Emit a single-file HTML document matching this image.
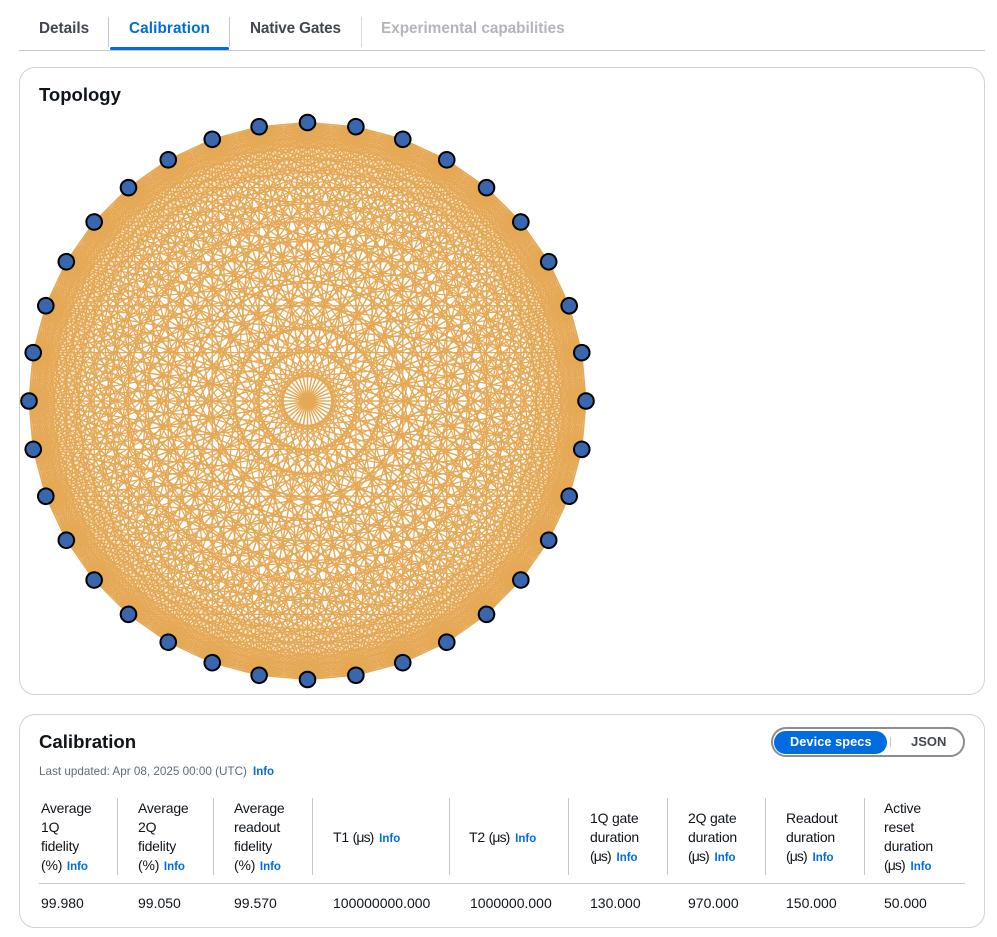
<!DOCTYPE html>
<html>
<head>
<meta charset="utf-8">
<style>
html,body{margin:0;padding:0;background:#fff;}
body{width:997px;height:937px;position:relative;overflow:hidden;font-family:"Liberation Sans",sans-serif;color:#0f141a;}
.t{position:absolute;white-space:nowrap;line-height:20px;height:20px;}
.tab{font-size:15.3px;font-weight:700;color:#424650;top:18.5px;}
.h{font-size:14px;letter-spacing:-.2px;}
.v{font-size:14px;top:893px;}
.i{color:#006ce0;font-size:11.5px;font-weight:700;margin-left:1px;letter-spacing:0;}
.u{margin-left:2px;}
.m{letter-spacing:-.9px;}
.box{position:absolute;background:#c6c6cd;}
.card{position:absolute;left:19px;width:964px;border:1px solid #d2d2d7;border-radius:16px;box-sizing:content-box;}
</style>
</head>
<body>
<div class="t tab" style="left:39px;">Details</div>
<div class="t tab" style="left:129px;color:#006ce0;letter-spacing:.1px;">Calibration</div>
<div class="t tab" style="left:250px;letter-spacing:-.15px;">Native Gates</div>
<div class="t tab" style="left:381px;color:#b4b4bb;">Experimental capabilities</div>
<div class="box" style="left:108px;top:17px;width:1px;height:30px;"></div>
<div class="box" style="left:229px;top:17px;width:1px;height:30px;"></div>
<div class="box" style="left:361px;top:17px;width:1px;height:30px;background:#dcdce0;"></div>
<div class="box" style="left:19px;top:50px;width:966px;height:1px;"></div>
<div style="position:absolute;left:110px;top:47px;width:119px;height:3px;background:#006ce0;border-radius:2px;"></div>

<div class="card" style="top:67px;height:626px;"></div>
<div class="t" style="left:39px;top:85px;font-size:18.5px;font-weight:700;">Topology</div>

<svg style="position:absolute;left:0;top:0;" width="997" height="937" viewBox="0 0 997 937">
<defs>
<g id="a" stroke="#e5a855" stroke-width="1.3" fill="none">
<line x1="0" y1="-278.5" x2="48.36" y2="-274.27"/>
<line x1="0" y1="-278.5" x2="95.25" y2="-261.7"/>
<line x1="0" y1="-278.5" x2="139.25" y2="-241.19"/>
<line x1="0" y1="-278.5" x2="179.02" y2="-213.34"/>
<line x1="0" y1="-278.5" x2="213.34" y2="-179.02"/>
<line x1="0" y1="-278.5" x2="241.19" y2="-139.25"/>
<line x1="0" y1="-278.5" x2="261.7" y2="-95.25"/>
<line x1="0" y1="-278.5" x2="274.27" y2="-48.36"/>
<line x1="0" y1="-278.5" x2="278.5" y2="0"/>
<line x1="0" y1="-278.5" x2="274.27" y2="48.36"/>
<line x1="0" y1="-278.5" x2="261.7" y2="95.25"/>
<line x1="0" y1="-278.5" x2="241.19" y2="139.25"/>
<line x1="0" y1="-278.5" x2="213.34" y2="179.02"/>
<line x1="0" y1="-278.5" x2="179.02" y2="213.34"/>
<line x1="0" y1="-278.5" x2="139.25" y2="241.19"/>
<line x1="0" y1="-278.5" x2="95.25" y2="261.7"/>
<line x1="0" y1="-278.5" x2="48.36" y2="274.27"/>
<line x1="0" y1="-278.5" x2="0" y2="278.5"/>
</g>
<g id="b">
<use href="#a"/>
<use href="#a" transform="rotate(10)"/>
<use href="#a" transform="rotate(20)"/>
<use href="#a" transform="rotate(30)"/>
<use href="#a" transform="rotate(40)"/>
<use href="#a" transform="rotate(50)"/>
<use href="#a" transform="rotate(60)"/>
<use href="#a" transform="rotate(70)"/>
<use href="#a" transform="rotate(80)"/>
</g>
<g id="n">
<circle cx="0" cy="-278.5" r="7.8" fill="#3a66ad" stroke="#000" stroke-width="2"/>
</g>
<g id="m">
<use href="#n"/>
<use href="#n" transform="rotate(10)"/>
<use href="#n" transform="rotate(20)"/>
<use href="#n" transform="rotate(30)"/>
<use href="#n" transform="rotate(40)"/>
<use href="#n" transform="rotate(50)"/>
<use href="#n" transform="rotate(60)"/>
<use href="#n" transform="rotate(70)"/>
<use href="#n" transform="rotate(80)"/>
</g>
</defs>
<g transform="translate(307.5 401)">
<use href="#b"/>
<use href="#b" transform="rotate(90)"/>
<use href="#b" transform="rotate(180)"/>
<use href="#b" transform="rotate(270)"/>
<circle r="266" fill="none" stroke="#e5a855" stroke-width="24" opacity=".7"/>
<circle r="240" fill="none" stroke="#e5a855" stroke-width="28" opacity=".25"/>
<use href="#m"/>
<use href="#m" transform="rotate(90)"/>
<use href="#m" transform="rotate(180)"/>
<use href="#m" transform="rotate(270)"/>
</g>
</svg>

<div class="card" style="top:714px;height:212px;"></div>
<div class="t" style="left:39px;top:732px;font-size:18.6px;font-weight:700;">Calibration</div>
<div class="t" style="left:39px;top:762px;font-size:11.7px;color:#5f6b7a;">Last updated: Apr 08, 2025 00:00 (UTC)</div>
<div class="t" style="left:253px;top:762px;font-size:11.5px;font-weight:700;color:#006ce0;">Info</div>

<div style="position:absolute;left:771px;top:727px;width:194px;height:30px;box-sizing:border-box;border:2px solid #8c8c94;border-radius:15px;"></div>
<div style="position:absolute;left:774px;top:731px;width:113px;height:23px;background:#006ce0;border-radius:12px;"></div>
<div class="t" style="left:790px;top:732px;font-size:12.7px;font-weight:700;color:#fff;letter-spacing:.1px;">Device specs</div>
<div class="box" style="left:890px;top:737px;width:1px;height:10px;"></div>
<div class="t" style="left:911px;top:732px;font-size:13px;font-weight:700;color:#424650;">JSON</div>

<div class="box" style="left:117px;top:798px;width:1px;height:77px;"></div>
<div class="box" style="left:213px;top:798px;width:1px;height:77px;"></div>
<div class="box" style="left:312px;top:798px;width:1px;height:77px;"></div>
<div class="box" style="left:449px;top:798px;width:1px;height:77px;"></div>
<div class="box" style="left:568px;top:798px;width:1px;height:77px;"></div>
<div class="box" style="left:667px;top:798px;width:1px;height:77px;"></div>
<div class="box" style="left:765px;top:798px;width:1px;height:77px;"></div>
<div class="box" style="left:864px;top:798px;width:1px;height:77px;"></div>
<div class="box" style="left:39px;top:883px;width:926px;height:1px;"></div>

<div class="t h" style="left:41px;top:798px;">Average</div>
<div class="t h" style="left:41px;top:817px;">1Q</div>
<div class="t h" style="left:41px;top:836px;">fidelity</div>
<div class="t h" style="left:41px;top:855px;">(%) <span class="i">Info</span></div>

<div class="t h" style="left:138px;top:798px;">Average</div>
<div class="t h" style="left:138px;top:817px;">2Q</div>
<div class="t h" style="left:138px;top:836px;">fidelity</div>
<div class="t h" style="left:138px;top:855px;">(%) <span class="i">Info</span></div>

<div class="t h" style="left:234px;top:798px;">Average</div>
<div class="t h" style="left:234px;top:817px;">readout</div>
<div class="t h" style="left:234px;top:836px;">fidelity</div>
<div class="t h" style="left:234px;top:855px;">(%) <span class="i">Info</span></div>

<div class="t h" style="left:333px;top:827px;">T1 <span class="m">(μs)</span> <span class="i u">Info</span></div>
<div class="t h" style="left:469px;top:827px;">T2 <span class="m">(μs)</span> <span class="i u">Info</span></div>

<div class="t h" style="left:590px;top:808px;">1Q gate</div>
<div class="t h" style="left:590px;top:827px;">duration</div>
<div class="t h" style="left:590px;top:846px;"><span class="m">(μs)</span> <span class="i u">Info</span></div>

<div class="t h" style="left:688px;top:808px;">2Q gate</div>
<div class="t h" style="left:688px;top:827px;">duration</div>
<div class="t h" style="left:688px;top:846px;"><span class="m">(μs)</span> <span class="i u">Info</span></div>

<div class="t h" style="left:786px;top:808px;">Readout</div>
<div class="t h" style="left:786px;top:827px;">duration</div>
<div class="t h" style="left:786px;top:846px;"><span class="m">(μs)</span> <span class="i u">Info</span></div>

<div class="t h" style="left:884px;top:798px;">Active</div>
<div class="t h" style="left:884px;top:817px;">reset</div>
<div class="t h" style="left:884px;top:836px;">duration</div>
<div class="t h" style="left:884px;top:855px;"><span class="m">(μs)</span> <span class="i u">Info</span></div>

<div class="t v" style="left:41px;">99.980</div>
<div class="t v" style="left:138px;">99.050</div>
<div class="t v" style="left:234px;">99.570</div>
<div class="t v" style="left:333px;">100000000.000</div>
<div class="t v" style="left:470px;">1000000.000</div>
<div class="t v" style="left:590px;">130.000</div>
<div class="t v" style="left:688px;">970.000</div>
<div class="t v" style="left:786px;">150.000</div>
<div class="t v" style="left:884px;">50.000</div>
</body>
</html>
